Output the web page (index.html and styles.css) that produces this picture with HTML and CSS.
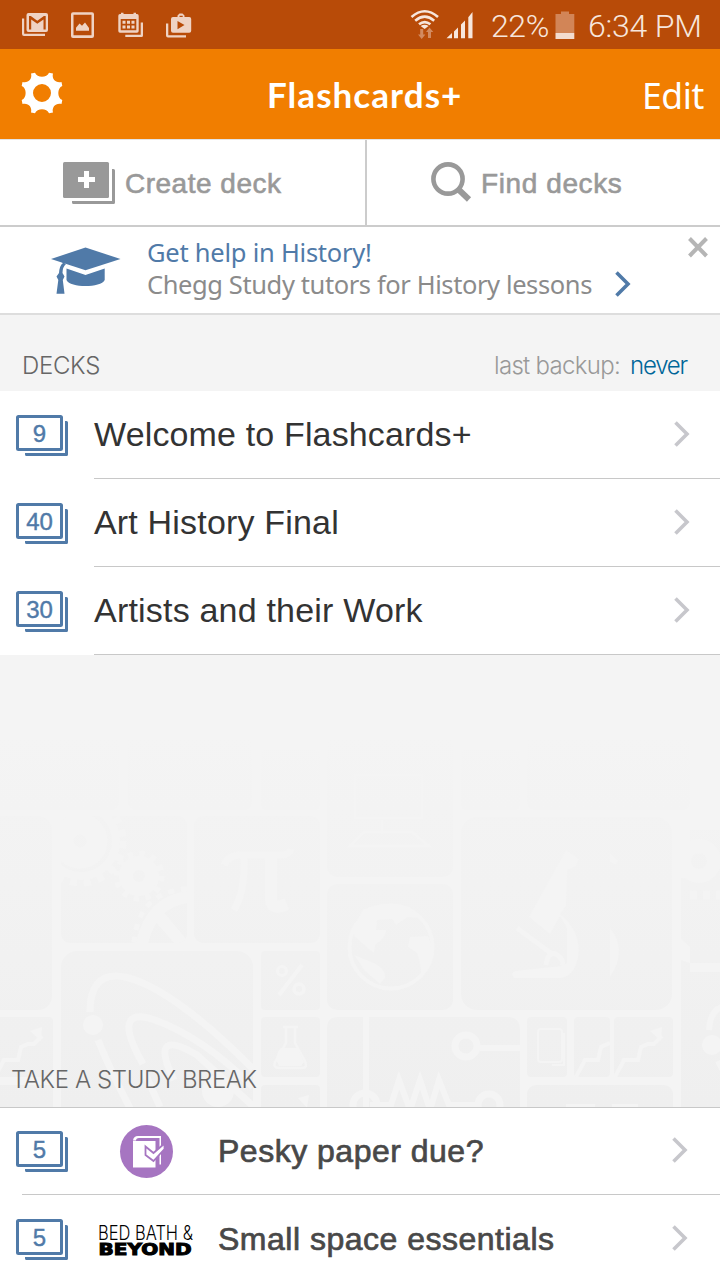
FILE: index.html
```
<!DOCTYPE html>
<html lang="en">
<head>
<meta charset="utf-8">
<title>Flashcards+</title>
<link rel="stylesheet" href="styles.css">
</head>
<body>
<svg class="defs" width="0" height="0">
  <defs>
    <symbol id="chevron" viewBox="0 0 18 28"><path d="M2.500 2.500 14 14 2.500 25.500" fill="none" stroke="currentColor" stroke-width="3.600"/></symbol>
    <symbol id="cards" viewBox="0 0 54 42">
      <rect x="1.500" y="1.500" width="44" height="33" rx="1" fill="#fff" stroke="currentColor" stroke-width="3"/>
      <path d="M49 6h1.500a1.500 1.500 0 0 1 1.500 1.500V39.500a1.500 1.500 0 0 1-1.500 1.500H10.500a1.500 1.500 0 0 1-1.500-1.500V38H49z" fill="currentColor"/>
    </symbol>
  </defs>
</svg>
<div class="screen">
  <div class="status">
    <svg class="status-left" width="200" height="49" viewBox="0 0 200 49" fill="#efd3c4">
      <path d="M22 18.500h2.200V33.800H45V36H24q-2 0-2-2z"/>
      <path fill-rule="evenodd" d="M28.500 13H46q2 0 2 2V30q0 2-2 2H28.500q-2 0-2-2V15q0-2 2-2zM29 16V29.500h2.200V19.500l6.100 4.300 6.200-4.300v10h2.200V16h-1.800l-6.600 4.800L30.800 16z"/>
      <path fill-rule="evenodd" d="M73 12.200H92q2 0 2 2V36q0 2-2 2H73q-2 0-2-2V14.200q0-2 2-2zM73.500 14.800V35.200H91.500V14.800z"/>
      <path d="M76 30.700V27.700L79.500 23.500 82 25.700 85 22.500 89 28V30.700z"/>
      <path fill-rule="evenodd" d="M120 14h1V12.800h2.500V14H133.500V12.800H136V14h1q1.700 0 1.700 1.700V31q0 1.700-1.700 1.700H120q-1.700 0-1.700-1.700V15.700Q118.300 14 120 14zM120.700 19V30.200H136.300V19z"/>
      <path d="M122.500 20.800h3v3h-3zm4.500 0h3v3h-3zm4.500 0h3v3h-3zm-9 4.700h3v3h-3zm4.500 0h3v3h-3zm4.500 0h3v3h-3zM140.700 22.500H143V35.500q0 1.500-1.500 1.500H125.300V34.700H140.700z"/>
      <path d="M166 23.500h2.300V35.200H186v2.300H168q-2 0-2-2z"/>
      <path fill-rule="evenodd" d="M177.500 17V15.500l2-1.900h3l2 1.900V17H189.200q2 0 2 2V30.800q0 2-2 2H173q-2 0-2-2V19q0-2 2-2zM179.500 17h3.200v-1.300h-3.200zM177.500 21V29.300L184.500 25z"/>
    </svg>
    <div class="status-right">
      <svg width="66" height="49" viewBox="410 0 66 49">
        <g fill="none" stroke="#f7e6dc" stroke-width="2.600"><path d="M411.500 17q13.200-11.500 26.500 0"/><path d="M415.200 20.700q9.500-8 19 0"/><path d="M419 24.300q5.700-4.500 11.400 0"/></g>
        <path d="M420.600 26q4-2.600 8 0L424.600 29z" fill="#f7e6dc"/>
        <path d="M420.200 29h3v5.500h2.200L421.700 39 418 34.500h2.200zM428 38h3v-6h2.300L429.500 27.500 426 32h2z" fill="#d28a60"/>
        <path d="M446.500 38.300 452 33v5.300zM454 31.500l4-4v10.800h-4zM461 24.500l4-4v17.800h-4zM468.300 17.300l4.200-5.200v26.200h-4.200z" fill="#f7e6dc"/>
      </svg>
      <span class="pct">22%</span>
      <svg class="battery" width="20" height="29" viewBox="0 0 20 29"><path d="M.5 3H6V.5h8V3h5.300V22H.5z" fill="#d28557"/><path d="M.5 22H19.300V28H.5z" fill="#f3dccf"/></svg>
      <span class="time">6:34 PM</span>
    </div>
  </div>

  <header class="header">
    <svg class="gear" width="42" height="42" viewBox="-21 -21 42 42">
      <path fill="#fff" fill-rule="evenodd" d="M-11-19.500L-7-20.300C-5-15 5-15 7-20.300L11-19.500C9.500-14 14-9.500 19.500-11L20.300-7C15-5 15 5 20.300 7L19.500 11C14 9.500 9.500 14 11 19.500L7 20.300C5 15-5 15-7 20.300L-11 19.500C-9.500 14-14 9.500-19.500 11L-20.300 7C-15 5-15-5-20.300-7L-19.500-11C-14-9.500-9.500-14-11-19.500zM0-9A9 9 0 1 0 0 9 9 9 0 1 0 0-9z"/>
    </svg>
    <h1 class="title">Flashcards+</h1>
    <span class="edit">Edit</span>
  </header>

  <nav class="tabs">
    <div class="tab tab-create">
      <svg class="create-icon" width="52" height="43" viewBox="0 0 52 43"><rect width="46" height="36" rx="1.500" fill="#999"/><path d="M21 9h5v6h6v5h-6v6h-5v-6h-6v-5h6z" fill="#fff"/><path d="M49 7h1.500q1.500 0 1.500 1.500V40.500q0 1.500-1.500 1.500H10.500Q9 42 9 40.500V39H49z" fill="#999"/></svg>
      <span class="tab-label create-label">Create deck</span>
    </div>
    <div class="tab tab-find">
      <svg width="41" height="41" viewBox="0 0 41 41" fill="none" stroke="#999"><circle cx="17" cy="17" r="14.600" stroke-width="4.600"/><path d="M26.500 26.500 38 37.500" stroke-width="6"/></svg>
      <span class="tab-label find-label">Find decks</span>
    </div>
  </nav>

  <section class="banner">
    <svg class="cap" width="72" height="50" viewBox="50 246 72 50" fill="#507aa8">
      <path d="M51 259 85.500 247.500 120.500 259 85.500 270.300z"/>
      <path d="M66.500 268.500 85.500 275 104.700 268.500V280C101 288 70 288 66.500 280z"/>
      <path d="M59.500 260.500 66 264Q62.500 267 62.500 273L64.500 276.500 62.800 280 64.500 293.700H56.500L58.300 280 56.500 276.500 59 273Q59.500 265.500 63 263z"/>
    </svg>
    <div class="banner-copy">
      <span class="banner-title">Get help in History!</span>
      <span class="banner-text">Chegg Study tutors for History lessons</span>
    </div>
    <svg class="banner-go" width="18" height="28"><use href="#chevron"/></svg>
    <svg class="close" width="22" height="22" viewBox="0 0 22 22"><path d="M2.500 2.500 19.500 20M19.500 2.500 2.500 20" stroke="#b5b5b5" stroke-width="4"/></svg>
  </section>

  <div class="decks-head">
    <span class="decks-title">DECKS</span>
    <span class="backup">last backup:</span>
    <span class="never">never</span>
  </div>

  <ul class="list">
    <li class="row"><div class="count"><svg width="54" height="42"><use href="#cards"/></svg><span class="num">9</span></div><div class="row-main"><span class="name n1">Welcome to Flashcards+</span><svg class="go" width="18" height="28"><use href="#chevron"/></svg></div></li>
    <li class="row"><div class="count"><svg width="54" height="42"><use href="#cards"/></svg><span class="num">40</span></div><div class="row-main"><span class="name n2">Art History Final</span><svg class="go" width="18" height="28"><use href="#chevron"/></svg></div></li>
    <li class="row"><div class="count"><svg width="54" height="42"><use href="#cards"/></svg><span class="num">30</span></div><div class="row-main"><span class="name n3">Artists and their Work</span><svg class="go" width="18" height="28"><use href="#chevron"/></svg></div></li>
  </ul>

  <section class="doodles">
    <svg class="pattern" width="720" height="452" viewBox="0 655 720 452">
      <defs>
        <linearGradient id="fade" gradientUnits="userSpaceOnUse" x1="0" y1="735" x2="0" y2="1107"><stop offset="0" stop-color="#f4f4f4"/><stop offset=".4" stop-color="#f2f2f2"/><stop offset="1" stop-color="#efefef"/></linearGradient>
        <clipPath id="tb"><rect x="61" y="816" width="126" height="127" rx="9"/></clipPath>
        <clipPath id="td"><rect x="61" y="951" width="192" height="170" rx="14"/></clipPath>
        <path id="rise" d="M0 59 9 42H23L26 29 33 26H39L47 18" fill="none" stroke="#f4f4f4" stroke-width="4"/>
      </defs>
      <g fill="url(#fade)">
        <rect x="-20" y="700" width="139" height="110" rx="8"/><rect x="128" y="700" width="124" height="110" rx="8"/><rect x="261" y="750" width="59" height="60" rx="5"/>
        <rect x="327" y="730" width="126" height="147" rx="10"/><rect x="461" y="750" width="59" height="60" rx="5"/><rect x="527" y="730" width="163" height="80" rx="8"/><rect x="690" y="830" width="40" height="60"/>
        <rect x="-20" y="816" width="72" height="194" rx="14"/><rect x="61" y="816" width="126" height="127" rx="9"/><rect x="194" y="816" width="126" height="127" rx="9"/>
        <rect x="61" y="951" width="192" height="180" rx="16"/><rect x="261" y="951" width="59" height="59" rx="4"/><rect x="261" y="1017" width="59" height="60" rx="4"/><rect x="261" y="1085" width="59" height="60" rx="4"/>
        <rect x="327" y="884" width="126" height="126" rx="10"/><path d="M327 1107V1028q0-11 11-11h25v90z"/><path d="M369 1017H507q13 0 13 13v77H369z"/>
        <rect x="461" y="817" width="211" height="193" rx="16"/><rect x="527" y="1017" width="40" height="60" rx="4"/><rect x="574" y="1017" width="36" height="60" rx="4"/><rect x="614" y="1017" width="59" height="60" rx="4"/><rect x="527" y="1085" width="146" height="60" rx="9"/>
        <path d="M681 878h39v85H690v-16l-9-8zM690 972h30v135H681V960l9 3z"/>
        <rect x="-20" y="1017" width="73" height="60" rx="4"/><rect x="-20" y="1085" width="73" height="60" rx="4"/>
      </g>
      <g fill="none" stroke="#f4f4f4">
        <g clip-path="url(#tb)">
          <circle cx="80" cy="841" r="17" stroke-width="21"/><circle cx="81" cy="841" r="35" stroke-width="8"/><circle cx="81" cy="841" r="42" stroke-width="7" stroke-dasharray="7 7"/>
          <circle cx="139" cy="876" r="13" stroke-width="14"/><circle cx="139" cy="876" r="22" stroke-width="7" stroke-dasharray="5 6.500"/>
          <path d="M191 897Q151 899 141 947M153 909 186 948" stroke-width="12"/><path d="M187 889Q137 892 134 945" stroke-width="5" stroke-dasharray="6 7"/>
        </g>
        <path d="M224 865Q229 855 241 855H282Q289 855 291 849M244 858Q245 892 234 910" stroke-width="7"/><path d="M271 858V900Q272 911 287 904" stroke-width="12"/>
        <g clip-path="url(#td)">
          <path d="M90 1012C90 940 170 985 253 1069M98 1040Q111 1072 131 1110" stroke-width="7"/>
          <path d="M143 1064C118 1020 129 1011 155 1020Q204 1038 253 1087M144 1071 160 1107" stroke-width="7"/>
          <path d="M174 1080C154 1040 169 1038 197 1055L254 1107" stroke-width="7"/>
        </g>
        <circle cx="282" cy="971" r="4.500" stroke-width="3"/><circle cx="299" cy="989" r="5" stroke-width="3.500"/><path d="M302 965 279 995" stroke-width="4"/>
        <path d="M283 1027H298M286 1028V1043L275 1062Q273 1068 279 1068H302Q308 1068 305 1061L295 1043V1028" stroke-width="2.500"/>
        <circle cx="391" cy="947" r="41.500" stroke-width="4"/>
        <circle cx="466" cy="1046" r="11" stroke-width="7"/><path d="M480 1048H520M370 1105H391L399 1080 410 1110 420 1080 430 1110 439 1080 449 1105H480" stroke-width="6"/><circle cx="489" cy="1105" r="11" stroke-width="7"/><circle cx="365" cy="1105" r="12" stroke-width="7"/>
        <rect x="538" y="1029" width="24" height="33" rx="3" stroke-width="2"/><path d="M564 1033V1065H552" stroke-width="2"/>
        <path d="M355 775H422V818H355zM382 820V834M350 846H429L412 832H364z" stroke-width="3"/>
        <path d="M517 928 552 954M546 965Q548 951 556 954 565 960 562 966" stroke-width="5"/>
        <circle cx="699" cy="861" r="15" stroke-width="14"/><path d="M690 895H720" stroke-width="9" stroke-dasharray="7 6"/><path d="M690 967H720" stroke-width="8"/>
        <path d="M709 1030Q710 1011 722 1007M718 1061 724 1072" stroke-width="6"/>
      </g>
      <g fill="#f4f4f4">
        <circle cx="93" cy="1025" r="10"/><circle cx="218" cy="1091" r="16"/><circle cx="712" cy="1045" r="10"/>
        <path d="M276 1059Q279 1046 283 1048H297L304 1062 301 1066H279z"/>
        <path d="M363 910Q391 896 420 916L415 918 408 917 396 925 392 919 377 920 376 930H386Q386 938 375 945L374 953 370 950 355 937 352 930zM410 937 428 936Q438 962 421 976 421 964 417 953L408 947zM354 955 376 964Q386 970 385 978L380 984 365 971z"/>
        <path d="M566 850 579 859 576 866 567 870 566 906 560 914Q582 932 578 957 575 976 560 978H514Q510 974 515 971L562 966 567 963V928L560 916 550 934 529 917z"/>
        <path d="M610 853 618 860 616 865 610 862zM610 928Q628 950 610 977z"/>
        <path d="M650 1031 662 1027 661 1041z"/><path d="M30 1031 42 1027 41 1041zM298 1098 309 1095 307 1108z"/>
        <path d="M566 1104H595V1107H566zM612 1104H638V1107H612z"/>
      </g>
      <use href="#rise" x="-5" y="1018"/><use href="#rise" x="615" y="1018"/>
      <path d="M576 1077 585 1060H598L601 1047 610 1043" fill="none" stroke="#f4f4f4" stroke-width="4"/>
    </svg>
    <h2 class="break-title">TAKE A STUDY BREAK</h2>
  </section>

  <ul class="list break-list">
    <li class="row">
      <div class="count"><svg width="54" height="42"><use href="#cards"/></svg><span class="num">5</span></div>
      <div class="brand">
        <svg class="paper" width="54" height="54" viewBox="0 0 54 54"><circle cx="27.500" cy="26.500" r="26.500" fill="#a675c1"/><path d="M14 16H36.500V42.500H14zM14 15.500Q14.500 11 19 11H42V39.500H40.500V13H20Q17 13 17 15.500z" fill="#fff"/><path d="M26.500 21.500 34.500 28 45.500 18.500V24L34.500 36 26.500 30z" fill="#fff" stroke="#a675c1" stroke-width="1.800"/></svg>
      </div>
      <span class="offer o1">Pesky paper due?</span><svg class="go" width="18" height="28"><use href="#chevron"/></svg>
    </li>
    <li class="row">
      <div class="count"><svg width="54" height="42"><use href="#cards"/></svg><span class="num">5</span></div>
      <div class="brand">
        <svg width="100" height="46" viewBox="0 0 100 46"><text x="1" y="24" class="bbb-top" textLength="95" lengthAdjust="spacingAndGlyphs">BED BATH &amp;</text><text x="1.500" y="38.500" class="bbb-bottom" textLength="93" lengthAdjust="spacingAndGlyphs">BEYOND</text></svg>
      </div>
      <span class="offer o2">Small space essentials</span><svg class="go" width="18" height="28"><use href="#chevron"/></svg>
    </li>
  </ul>
</div>
</body>
</html>
```
FILE: styles.css
```
* { box-sizing: border-box; }
body { margin: 0; background: #f4f4f4; font-family: "Liberation Sans", Arial, sans-serif; }
svg { display: block; flex: none; }
.defs { position: absolute; }
.screen { width: 720px; height: 1280px; overflow: hidden; display: flex; flex-direction: column; white-space: nowrap; }
.screen > * { flex: none; }

.status { height: 49px; background: #b84b08; display: flex; justify-content: space-between; }
.status-right { display: flex; align-items: center; width: 310px; color: #f7e6dc; font-family: Roboto, sans-serif; font-weight: 300; font-size: 32px; line-height: 49px; padding-top: 4px; }
.status-right svg:first-child { margin-top: -4px; }
.pct { width: 64px; margin-left: 15px; letter-spacing: -0.4px; }
.battery { margin-top: -3px; }
.time { margin-left: 13px; letter-spacing: -0.2px; }

.header { height: 90px; background: #f17e00; color: #fff; display: flex; align-items: center; padding-left: 21px; }
.gear { margin-top: -2px; }
.title { margin: 0 0 0 204px; width: 375px; font: 700 35px/46px Lato, sans-serif; letter-spacing: 1.05px; }
.edit { font: 400 35.500px/46px "Noto Sans", sans-serif; letter-spacing: -0.4px; padding-top: 2px; }

.tabs { height: 88px; background: #fff; border-top: 1px solid #e3e3e3; border-bottom: 2px solid #ccc; display: flex; color: #999; }
.tab { display: flex; align-items: center; }
.tab-create { width: 367px; border-right: 2px solid #ccc; padding-left: 63px; gap: 10px; }
.create-icon { margin-top: 2px; }
.tab-find { padding-left: 64px; gap: 9px; }
.tab-label { font-size: 28px; line-height: 40px; -webkit-text-stroke: 0.6px currentColor; padding-top: 2px; }
.create-label { letter-spacing: 0.5px; }
.find-label { letter-spacing: 0.6px; }

.banner { height: 88px; background: #fff; border-bottom: 2px solid #ddd; display: flex; padding-left: 50px; font-family: "Noto Sans", sans-serif; font-size: 25.500px; }
.cap { margin-top: 19px; }
.banner-copy { display: flex; flex-direction: column; width: 467px; padding-left: 25px; padding-top: 9px; line-height: 32px; }
.banner-title { color: #507aa8; letter-spacing: -0.24px; }
.banner-text { color: #8b8b8b; letter-spacing: -0.4px; }
.banner-go { color: #507aa8; margin: 43px 0 0 25px; }
.close { margin: 9px 0 0 55px; }

.decks-head { height: 76px; display: flex; align-items: baseline; padding: 35px 0 0 22px; font: 300 24px/32px Inter, sans-serif; }
.decks-title { width: 472px; color: #666; letter-spacing: -0.3px; }
.backup { width: 136px; color: #999; letter-spacing: -0.7px; }
.never { color: #006699; letter-spacing: -1.2px; }

.list { list-style: none; margin: 0; padding: 0; background: #fff; }
.row { height: 88px; display: flex; align-items: center; padding-left: 16px; }
.count { position: relative; width: 78px; color: #507aa8; margin-top: 2px; }
.num { position: absolute; left: 0; top: 0; width: 47px; text-align: center; font-size: 24px; line-height: 38px; -webkit-text-stroke: 0.4px currentColor; }
.row-main { height: 88px; flex: 1; display: flex; align-items: center; border-bottom: 1px solid #c8c8c8; }
.name { flex: 1; font-size: 34px; line-height: 40px; color: #333; padding-bottom: 2px; }
.n1 { letter-spacing: 0.15px; }
.n2 { letter-spacing: 0.18px; }
.n3 { letter-spacing: 0.2px; }
.go { color: #c7c7cc; margin: -1px 29px 0 0; }

.doodles { height: 452px; position: relative; }
.pattern { position: absolute; inset: 0; }
.break-title { position: relative; margin: 0; padding: 409px 0 0 11px; font: 300 24px/32px Inter, sans-serif; color: #666; letter-spacing: -0.4px; }

.break-list { border-top: 1px solid #c8c8c8; }
.break-list .row { position: relative; height: 87px; }
.break-list .row + .row { height: 88px; }
.break-list .row:first-child::after { content: ""; position: absolute; left: 22px; right: 0; bottom: 0; border-bottom: 1px solid #c8c8c8; }
.break-list .count { margin-top: 0; }
.break-list .row + .row .count { margin-top: 2px; }
.break-list .go { margin: -3px 31px 0 0; }
.brand { width: 124px; padding-left: 3px; }
.paper { margin-left: 22px; }
.offer { flex: 1; font-size: 32px; line-height: 40px; color: #484848; -webkit-text-stroke: 0.7px currentColor; letter-spacing: 0.5px; padding-bottom: 1px; }
.bbb-top { font: 300 20px Inter, sans-serif; }
.bbb-bottom { font: 700 15px "DejaVu Sans", sans-serif; stroke: #000; stroke-width: 1px; }
```
